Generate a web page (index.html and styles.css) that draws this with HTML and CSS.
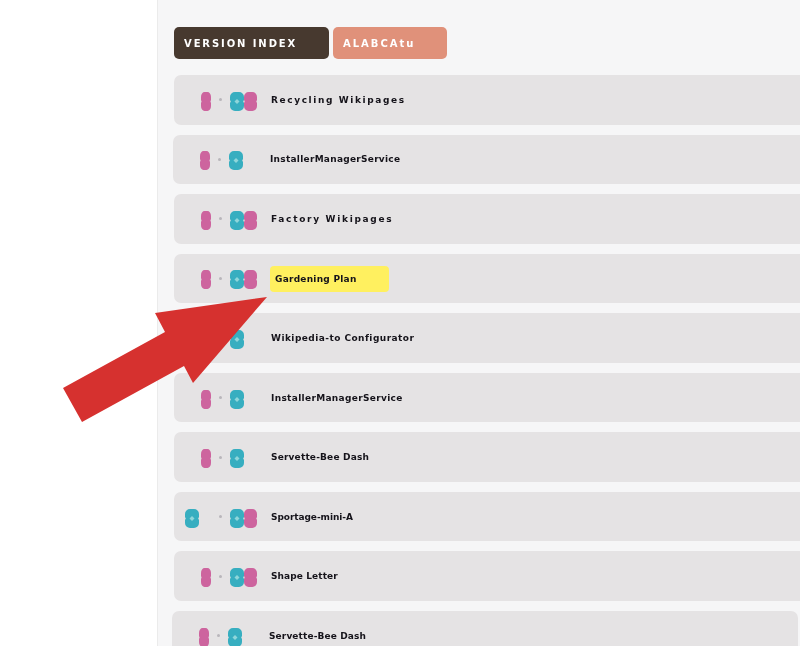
FILE: index.html
```html
<!DOCTYPE html>
<html lang="en">
<head>
    <meta charset="UTF-8">
    <meta name="viewport" content="width=device-width, initial-scale=1.0">
    <title>Recipes</title>
    <link rel="stylesheet" href="styles.css">
</head>
<body>
    <svg class="defs" width="0" height="0">
        <symbol id="pill" viewBox="0 0 14 19" preserveAspectRatio="none">
            <path d="M5 0h4a5 5 0 0 1 5 5v3l-.8 1.500.8 1.500v3a5 5 0 0 1-5 5H5a5 5 0 0 1-5-5v-3l.8-1.500L0 8V5a5 5 0 0 1 5-5z"/>
        </symbol>
        <symbol id="teal" viewBox="0 0 14 19">
            <path d="M5 0h4a5 5 0 0 1 5 5v3l-.8 1.500.8 1.500v3a5 5 0 0 1-5 5H5a5 5 0 0 1-5-5v-3l.8-1.500L0 8V5a5 5 0 0 1 5-5z"/>
            <path class="glint" d="M7 7l2.500 2.500L7 12 4.500 9.500z"/>
        </symbol>
    </svg>

    <div class="page">
        <aside class="sidebar"></aside>
        <main class="main">
            <div class="tabs">
                <button class="tab tab-dark"><span class="blur">VERSION INDEX</span></button>
                <button class="tab tab-salmon"><span class="blur">ALABCAtu</span></button>
            </div>

            <div class="row">
                <div class="slot"><svg class="pink"><use href="#pill"/></svg></div>
                <i class="dot"></i>
                <div class="slot"><svg class="teal"><use href="#teal"/></svg><svg class="pink"><use href="#pill"/></svg></div>
                <span class="name w134">Recycling Wikipages</span>
            </div>
            <div class="row shift-1">
                <div class="slot"><svg class="pink"><use href="#pill"/></svg></div>
                <i class="dot"></i>
                <div class="slot"><svg class="teal"><use href="#teal"/></svg></div>
                <span class="name w130">InstallerManagerService</span>
            </div>
            <div class="row">
                <div class="slot"><svg class="pink"><use href="#pill"/></svg></div>
                <i class="dot"></i>
                <div class="slot"><svg class="teal"><use href="#teal"/></svg><svg class="pink"><use href="#pill"/></svg></div>
                <span class="name w122">Factory Wikipages</span>
            </div>
            <div class="row">
                <div class="slot"><svg class="pink"><use href="#pill"/></svg></div>
                <i class="dot"></i>
                <div class="slot"><svg class="teal"><use href="#teal"/></svg><svg class="pink"><use href="#pill"/></svg></div>
                <span class="mark"><span class="name">Gardening Plan</span></span>
            </div>
            <div class="row">
                <div class="slot"><svg class="pink"><use href="#pill"/></svg></div>
                <i class="dot"></i>
                <div class="slot"><svg class="teal"><use href="#teal"/></svg></div>
                <span class="name w143">Wikipedia-to Configurator</span>
            </div>
            <div class="row">
                <div class="slot"><svg class="pink"><use href="#pill"/></svg></div>
                <i class="dot"></i>
                <div class="slot"><svg class="teal"><use href="#teal"/></svg></div>
                <span class="name w131">InstallerManagerService</span>
            </div>
            <div class="row">
                <div class="slot"><svg class="pink"><use href="#pill"/></svg></div>
                <i class="dot"></i>
                <div class="slot"><svg class="teal"><use href="#teal"/></svg></div>
                <span class="name w98">Servette-Bee Dash</span>
            </div>
            <div class="row">
                <div class="slot"><svg class="teal"><use href="#teal"/></svg></div>
                <i class="dot"></i>
                <div class="slot"><svg class="teal"><use href="#teal"/></svg><svg class="pink"><use href="#pill"/></svg></div>
                <span class="name w82">Sportage-mini-A</span>
            </div>
            <div class="row">
                <div class="slot"><svg class="pink"><use href="#pill"/></svg></div>
                <i class="dot"></i>
                <div class="slot"><svg class="teal"><use href="#teal"/></svg><svg class="pink"><use href="#pill"/></svg></div>
                <span class="name w66">Shape Letter</span>
            </div>
            <div class="row shift-2">
                <div class="slot"><svg class="pink"><use href="#pill"/></svg></div>
                <i class="dot"></i>
                <div class="slot"><svg class="teal"><use href="#teal"/></svg></div>
                <span class="name w98b">Servette-Bee Dash</span>
            </div>
        </main>
    </div>

    <svg class="arrow" viewBox="0 0 800 646" width="800" height="646">
        <polygon points="267,297 155,313 165,332 63,388 82,422 184,366 193,383"/>
    </svg>
</body>
</html>
```

FILE: styles.css
```css
html, body {
    margin: 0;
    height: 646px;
    overflow: hidden;
}
body {
    font-family: "Liberation Sans", Arial, sans-serif;
    background: #fff;
    position: relative;
}
.defs {
    position: absolute;
}
.page {
    display: flex;
    height: 646px;
}
.sidebar {
    width: 157px;
    flex: none;
    background: #fff;
    border-right: 1px solid #ebebeb;
}
.main {
    flex: 1;
    min-width: 0;
    background: #f6f6f7;
    padding: 27px 0 0 16px;
}
.tabs {
    display: flex;
    gap: 4px;
    margin-bottom: 16px;
}
.tab {
    height: 32px;
    border: none;
    border-radius: 5px;
    padding: 0 0 0 10px;
    color: #fff;
    font-family: "DejaVu Sans", sans-serif;
    font-size: 10px;
    font-weight: bold;
    text-align: left;
}
.tab-dark {
    width: 155px;
    background: #47392f;
    letter-spacing: 1.9px;
}
.tab-salmon {
    width: 114px;
    background: #e0917a;
    letter-spacing: 2px;
}
.blur {
    display: inline-block;
    filter: blur(0.6px);
}
.row {
    display: flex;
    align-items: center;
    width: 660px;
    height: 49.55px;
    margin-bottom: 10px;
    padding-left: 11px;
    box-sizing: border-box;
    border-radius: 7px;
    background: #e5e3e4;
}
.shift-1 {
    margin-left: -1px;
}
.shift-2 {
    margin-left: -2px;
    width: 626px;
}
.slot {
    display: flex;
    height: 19px;
    margin-top: 3px;
}
.slot:nth-child(1) {
    width: 26px;
    justify-content: flex-end;
}
.slot:nth-child(1) .teal {
    margin-right: auto;
}
.slot:nth-child(3) {
    width: 27px;
}
.slot svg {
    width: 14px;
    height: 19px;
    flex: none;
}
.slot .pink {
    width: 13px;
}
.slot:nth-child(1) .pink {
    width: 10px;
}
.teal {
    fill: #37aec0;
}
.pink {
    fill: #cd649e;
}
.glint {
    fill: #8fd6da;
}
.dot {
    width: 3px;
    height: 3px;
    margin: 0 8px 0 8px;
    border-radius: 50%;
    background: #b9b6bb;
}
.name {
    margin-left: 14px;
    color: #15131a;
    font-family: "DejaVu Sans", sans-serif;
    font-size: 9px;
    font-weight: bold;
    white-space: nowrap;
    filter: blur(0.6px);
}
.w134 { letter-spacing: 1.6px; }
.w130 { letter-spacing: 0.27px; }
.w122 { letter-spacing: 1.7px; }
.w143 { letter-spacing: 0.45px; }
.w131 { letter-spacing: 0.33px; }
.w98 { letter-spacing: 0.18px; }
.w98b { letter-spacing: 0.12px; }
.w82 { letter-spacing: -0.07px; }
.w66 { letter-spacing: 0.1px; }
.mark {
    margin: 2px 0 0 13px;
    padding: 8px 32px 8px 5px;
    border-radius: 4px;
    background: #fff05f;
    width: 82px;
}
.mark .name {
    display: block;
    margin-left: 0;
    letter-spacing: 0.25px;
}
.arrow {
    position: absolute;
    left: 0;
    top: 0;
    fill: #d6312f;
}
```
